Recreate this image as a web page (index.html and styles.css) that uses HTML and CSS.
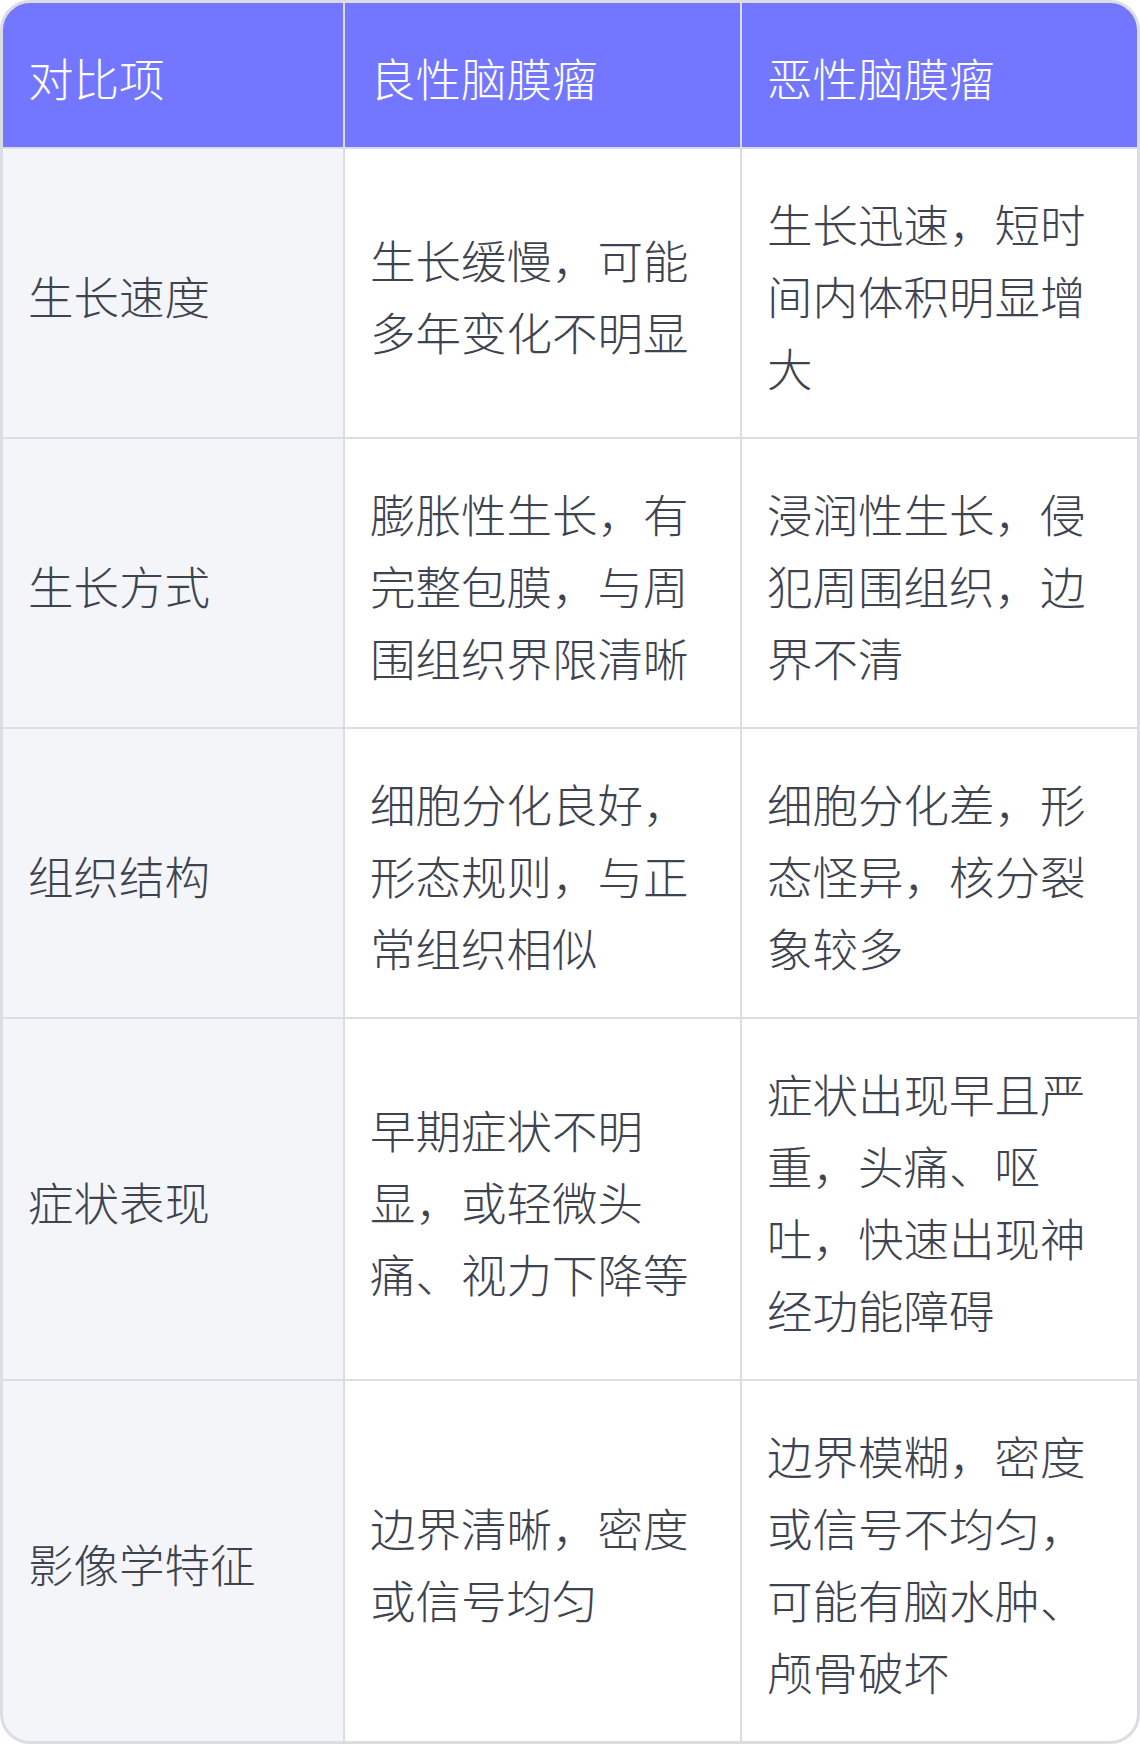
FILE: index.html
```html
<!DOCTYPE html>
<html lang="zh-CN">
<head>
<meta charset="utf-8">
<title>良性与恶性脑膜瘤对比</title>
<link rel="stylesheet" href="styles.css">
</head>
<body>
<div class="table">
  <div class="cell head">对比项</div>
  <div class="cell head">良性脑膜瘤</div>
  <div class="cell head">恶性脑膜瘤</div>

  <div class="cell key">生长速度</div>
  <div class="cell">生长缓慢，可能多年变化不明显</div>
  <div class="cell">生长迅速，短时间内体积明显增大</div>

  <div class="cell key">生长方式</div>
  <div class="cell">膨胀性生长，有完整包膜，与周围组织界限清晰</div>
  <div class="cell">浸润性生长，侵犯周围组织，边界不清</div>

  <div class="cell key">组织结构</div>
  <div class="cell">细胞分化良好，形态规则，与正常组织相似</div>
  <div class="cell">细胞分化差，形态怪异，核分裂象较多</div>

  <div class="cell key">症状表现</div>
  <div class="cell">早期症状不明显，或轻微头痛、视力下降等</div>
  <div class="cell">症状出现早且严重，头痛、呕吐，快速出现神经功能障碍</div>

  <div class="cell key">影像学特征</div>
  <div class="cell">边界清晰，密度或信号均匀</div>
  <div class="cell">边界模糊，密度或信号不均匀，可能有脑水肿、颅骨破坏</div>
</div>
</body>
</html>
```
FILE: styles.css
```css
html, body {
  margin: 0;
  padding: 0;
  background: #ffffff;
}

.table {
  width: 1140px;
  box-sizing: border-box;
  border: 3px solid #dcdde3;
  border-radius: 30px;
  overflow: hidden;
  display: grid;
  grid-template-columns: 340px 1fr 1fr;
  gap: 2px;
  background: #dcdde3;
  font-family: "Noto Sans CJK SC", "Noto Sans", sans-serif;
  font-size: 45.5px;
  font-weight: 300;
  line-height: 72px;
  color: #3e4350;
}

.cell {
  background: #ffffff;
  padding: 38px 26px 34px 25px;
  display: flex;
  align-items: center;
}

.head {
  background: #7377ff;
  color: #ffffff;
}

.key {
  background: #f4f5f9;
}
```
